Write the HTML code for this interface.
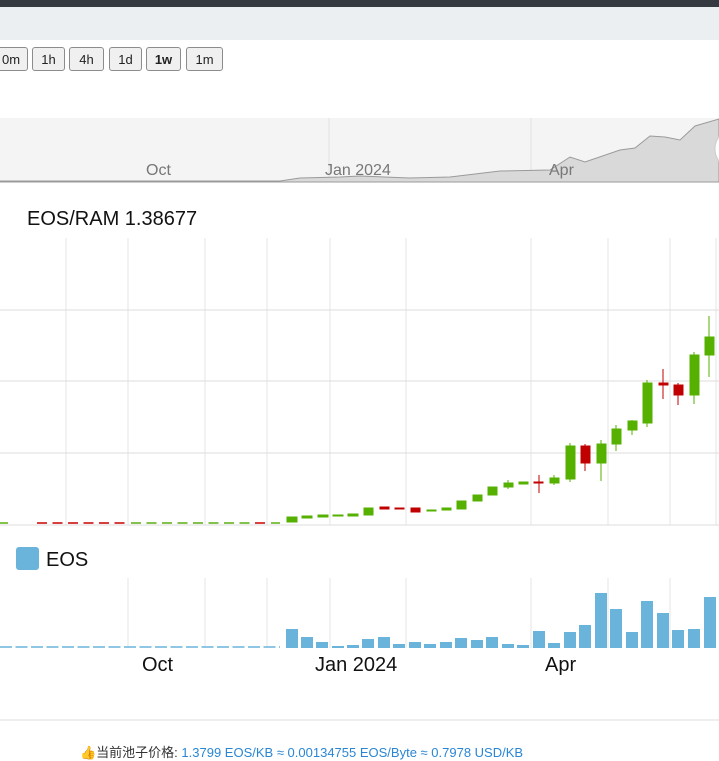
<!DOCTYPE html>
<html><head><meta charset="utf-8"><style>
body{margin:0;width:719px;height:751px;overflow:hidden;background:#fff;font-family:"Liberation Sans","Noto Sans CJK SC",sans-serif;position:relative}
.top{position:absolute;left:0;top:0;width:719px;height:7px;background:#353a40}
.bar{position:absolute;left:0;top:7px;width:719px;height:33px;background:#eceff2}
.btn{position:absolute;top:47px;height:24px;border:1px solid #8c8c8c;border-radius:3px;background:#f0f0f0;font-size:13px;line-height:24px;text-align:center;color:#222;box-sizing:border-box}
svg{position:absolute;left:0;top:0}
.foot{position:absolute;left:80px;top:742px;font-size:13px;color:#333;white-space:nowrap}
.foot span{color:#2a86d4}
</style></head><body>
<div class="top"></div><div class="bar"></div>
<div class="btn" style="left:-6px;width:34px">0m</div>
<div class="btn" style="left:32px;width:33px">1h</div>
<div class="btn" style="left:69px;width:35px">4h</div>
<div class="btn" style="left:109px;width:33px">1d</div>
<div class="btn" style="left:146px;width:35px;font-weight:bold">1w</div>
<div class="btn" style="left:186px;width:37px">1m</div>
<svg width="719" height="751" viewBox="0 0 719 751">
<rect x="0" y="118" width="719" height="64" fill="#f4f4f4"/>
<line x1="329" y1="118" x2="329" y2="182" stroke="#e2e2e2"/>
<line x1="531" y1="118" x2="531" y2="182" stroke="#e2e2e2"/>
<path d="M0 181 L280 181 L300 178 L340 177 L360 176 L410 178 L450 177 L500 171 L550 170 L570 157 L585 162 L620 150 L635 148 L650 136 L665 137 L680 140 L695 126 L719 119 L719 182 L0 182Z" fill="#d9d9d9" stroke="#9a9a9a"/>
<text x="146" y="175" font-size="16" fill="#777">Oct</text>
<text x="325" y="175" font-size="16" fill="#777">Jan 2024</text>
<text x="549" y="175" font-size="16" fill="#777">Apr</text>
<circle cx="735" cy="149" r="20" fill="#fff" stroke="#ccc"/>
<text x="27" y="225" font-size="20" fill="#111">EOS/RAM 1.38677</text>
<g stroke="#e6e6e6">
<line x1="66" y1="238" x2="66" y2="525"/><line x1="128" y1="238" x2="128" y2="525"/><line x1="205" y1="238" x2="205" y2="525"/><line x1="267" y1="238" x2="267" y2="525"/><line x1="330" y1="238" x2="330" y2="525"/><line x1="406" y1="238" x2="406" y2="525"/><line x1="531" y1="238" x2="531" y2="525"/><line x1="608" y1="238" x2="608" y2="525"/><line x1="670" y1="238" x2="670" y2="525"/><line x1="716" y1="238" x2="716" y2="525"/>
<line x1="128" y1="578" x2="128" y2="648"/><line x1="205" y1="578" x2="205" y2="648"/><line x1="267" y1="578" x2="267" y2="648"/><line x1="330" y1="578" x2="330" y2="648"/><line x1="406" y1="578" x2="406" y2="648"/><line x1="531" y1="578" x2="531" y2="648"/><line x1="608" y1="578" x2="608" y2="648"/><line x1="670" y1="578" x2="670" y2="648"/>
</g>
<g stroke="#dcdcdc"><line x1="0" y1="310" x2="719" y2="310"/><line x1="0" y1="381" x2="719" y2="381"/><line x1="0" y1="453" x2="719" y2="453"/><line x1="0" y1="525" x2="719" y2="525"/><line x1="0" y1="720" x2="719" y2="720"/></g>
<line x1="0" y1="523" x2="10" y2="523" stroke="#5aaf10" stroke-width="1.5" stroke-dasharray="8 7.5"/>
<line x1="37" y1="523" x2="126" y2="523" stroke="#c00" stroke-width="1.5" stroke-dasharray="10 5.5"/>
<line x1="131" y1="523" x2="250" y2="523" stroke="#5aaf10" stroke-width="1.5" stroke-dasharray="10 5.5"/>
<line x1="255" y1="523" x2="266" y2="523" stroke="#c00" stroke-width="1.5" stroke-dasharray="10 5.5"/>
<line x1="271" y1="523" x2="280" y2="523" stroke="#5aaf10" stroke-width="1.5"/>
<g fill="#55b000" stroke="#55b000">
<rect x="287" y="517" width="10" height="5"/><rect x="302" y="516" width="10" height="2"/><rect x="318" y="515" width="10" height="2"/><rect x="333" y="515" width="10" height="1"/><rect x="348" y="514" width="10" height="2"/><rect x="364" y="508" width="9" height="7"/>
<rect x="427" y="510" width="9" height="1"/><rect x="442" y="508" width="9" height="2"/><rect x="457" y="501" width="9" height="8"/><rect x="473" y="495" width="9" height="6"/><rect x="488" y="487" width="9" height="8"/><rect x="504" y="483" width="9" height="4"/><rect x="519" y="482" width="9" height="2"/><rect x="550" y="478" width="9" height="5"/><rect x="566" y="446" width="9" height="33"/><rect x="597" y="444" width="9" height="19"/><rect x="612" y="429" width="9" height="15"/><rect x="628" y="421" width="9" height="9"/><rect x="643" y="383" width="9" height="40"/><rect x="690" y="355" width="9" height="40"/><rect x="705" y="337" width="9" height="18"/>
<line x1="601" y1="440" x2="601" y2="481"/><line x1="616" y1="425" x2="616" y2="451"/><line x1="632" y1="420" x2="632" y2="435"/><line x1="647" y1="380" x2="647" y2="427"/><line x1="694" y1="352" x2="694" y2="404"/><line x1="709" y1="316" x2="709" y2="377"/><line x1="570" y1="443" x2="570" y2="482"/><line x1="554" y1="475" x2="554" y2="485"/><line x1="508" y1="480" x2="508" y2="489"/>
</g>
<g fill="#c00000" stroke="#c00000">
<rect x="380" y="507" width="9" height="2"/><rect x="395" y="508" width="9" height="1"/><rect x="411" y="508" width="9" height="4"/><rect x="534" y="482" width="9" height="1"/><rect x="581" y="446" width="9" height="17"/><rect x="659" y="383" width="9" height="2"/><rect x="674" y="385" width="9" height="10"/>
<line x1="539" y1="475" x2="539" y2="493"/><line x1="585" y1="444" x2="585" y2="471"/><line x1="663" y1="369" x2="663" y2="399"/><line x1="678" y1="383" x2="678" y2="405"/>
</g>
<rect x="16" y="547" width="23" height="23" rx="3" fill="#6ab4dc"/>
<text x="46" y="566" font-size="20" fill="#111">EOS</text>
<line x1="0" y1="647" x2="280" y2="647" stroke="#6ab4dc" stroke-width="1.5" stroke-dasharray="12 3.5"/>
<g fill="#6ab4dc">
<rect x="286" y="629" width="12" height="19"/><rect x="301" y="637" width="12" height="11"/><rect x="316" y="642" width="12" height="6"/><rect x="332" y="646" width="12" height="2"/><rect x="347" y="645" width="12" height="3"/><rect x="362" y="639" width="12" height="9"/><rect x="378" y="637" width="12" height="11"/><rect x="393" y="644" width="12" height="4"/><rect x="409" y="642" width="12" height="6"/><rect x="424" y="644" width="12" height="4"/><rect x="440" y="642" width="12" height="6"/><rect x="455" y="638" width="12" height="10"/><rect x="471" y="640" width="12" height="8"/><rect x="486" y="637" width="12" height="11"/><rect x="502" y="644" width="12" height="4"/><rect x="517" y="645" width="12" height="3"/><rect x="533" y="631" width="12" height="17"/><rect x="548" y="643" width="12" height="5"/><rect x="564" y="632" width="12" height="16"/><rect x="579" y="625" width="12" height="23"/><rect x="595" y="593" width="12" height="55"/><rect x="610" y="609" width="12" height="39"/><rect x="626" y="632" width="12" height="16"/><rect x="641" y="601" width="12" height="47"/><rect x="657" y="613" width="12" height="35"/><rect x="672" y="630" width="12" height="18"/><rect x="688" y="629" width="12" height="19"/><rect x="704" y="597" width="12" height="51"/>
</g>
<text x="142" y="671" font-size="20" fill="#111">Oct</text>
<text x="315" y="671" font-size="20" fill="#111">Jan 2024</text>
<text x="545" y="671" font-size="20" fill="#111">Apr</text>
</svg>
<div class="foot">👍当前池子价格: <span>1.3799 EOS/KB ≈ 0.00134755 EOS/Byte ≈ 0.7978 USD/KB</span></div>
</body></html>
